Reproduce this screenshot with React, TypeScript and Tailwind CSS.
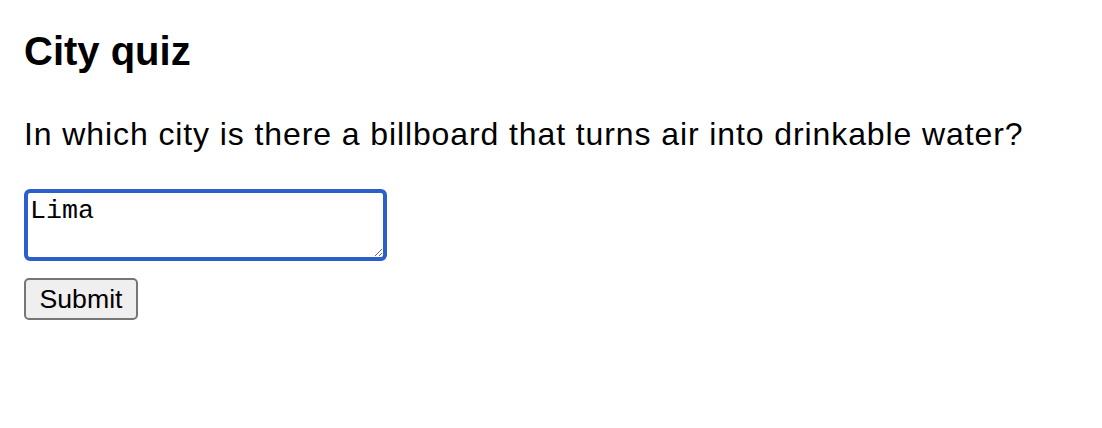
import React from "react";

export default function App() {
  return (
    <div className="min-h-screen bg-white text-black pl-6 pt-[28px]" style={{}}>
      <h2 className="text-[40px] leading-[46px] font-bold font-['Liberation_Sans',Arial,sans-serif]">
        City quiz
      </h2>
      <p className="mt-[42px] text-[32px] leading-[37px] tracking-[0.9px] font-['Liberation_Sans',Arial,sans-serif]">
        In which city is there a billboard that turns air into drinkable water?
      </p>
      <form className="mt-[36px]" onSubmit={(e) => e.preventDefault()}>
        <textarea
          defaultValue="Lima"
          className="block w-[363px] h-[72px] border-[4px] border-[#2c5fc9] rounded-[6px] pt-[3px] pl-[2px] pr-[2px] text-[26.67px] leading-[30px] font-['Liberation_Mono','Courier_New',monospace] text-black outline-none"
        />
        <button
          type="submit"
          className="mt-[17px] flex items-center justify-center w-[114px] h-[42px] border-2 border-[#767676] rounded-[5px] bg-[#efefef] text-[26.67px] leading-[30px] font-['Liberation_Sans',Arial,sans-serif] text-black"
        >
          Submit
        </button>
      </form>
    </div>
  );
}
